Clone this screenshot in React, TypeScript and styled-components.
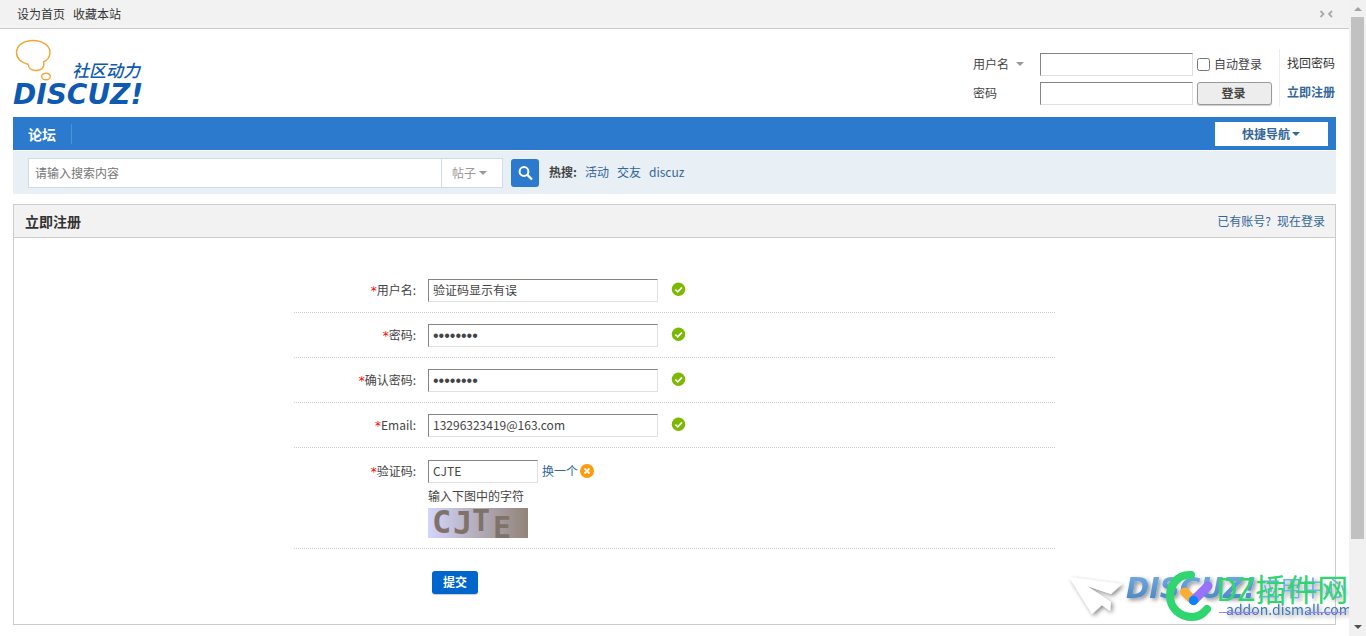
import React from 'react';
import styled, { createGlobalStyle } from 'styled-components';

const Global = createGlobalStyle`
  * { box-sizing: border-box; }
  body {
    margin: 0;
    background: #fff;
    color: #444;
    font: 12px/18px "Noto Sans CJK SC", sans-serif;
  }
  input, button, select { font: inherit; color: inherit; margin: 0; }
  a { color: inherit; text-decoration: none; }
  svg { overflow: visible; }
`;

const Shell = styled.div`
  display: flex;
  min-height: 100vh;
`;

const Page = styled.div`
  flex: 1;
  min-width: 0;
  position: relative;
  padding-bottom: 11px;
  display: flex;
  flex-direction: column;
`;

const ScrollTrack = styled.div`
  position: sticky;
  top: 0;
  flex: 0 0 17px;
  height: 100vh;
  background: #f1f1f1;
  display: flex;
  flex-direction: column;
  align-items: center;
  padding: 7px 0;
`;

const ScrollThumb = styled.div`
  width: 13px;
  height: 84%;
  margin: 6px 0 auto;
  background: #c1c1c1;
`;

const Arrow = styled.i<{ $up?: boolean; $color: string }>`
  display: inline-block;
  border: 4px solid transparent;
  border-top-width: ${p => (p.$up ? 0 : 4)}px;
  border-bottom-width: ${p => (p.$up ? 4 : 0)}px;
  border-top-color: ${p => p.$color};
  border-bottom-color: ${p => p.$color};
`;

const TopBar = styled.div`
  display: flex;
  align-items: center;
  gap: 8px;
  height: 29px;
  padding: 0 16px 0 17px;
  background: #f2f2f2;
  border-bottom: 1px solid #ccc;
`;

const WidthToggle = styled.button`
  display: flex;
  margin-left: auto;
  padding: 0;
  border: 0;
  background: none;
`;

const Wrap = styled.div`
  padding: 0 13px;
  flex: 1;
  display: flex;
  flex-direction: column;
`;

const Header = styled.header`
  display: flex;
  justify-content: space-between;
  height: 88px;
  padding-top: 10px;
`;

const LoginForm = styled.form`
  display: flex;
  padding-top: 10px;
`;

const LoginGrid = styled.div`
  display: grid;
  grid-template-columns: 67px 153px 79px;
  grid-auto-rows: 23px;
  gap: 6px 0;
  align-items: center;
  padding: 4px 7px 0 0;

  & > :nth-child(3n) { margin-left: 4px; }
`;

const LoginName = styled.label`
  display: flex;
  align-items: center;
  gap: 7px;
  padding-bottom: 2px;
`;

const AutoLogin = styled.label`
  display: flex;
  align-items: center;
  gap: 4px;
  white-space: nowrap;

  & > span { padding-bottom: 2px; }
`;

const Tick = styled.input`
  width: 13px;
  height: 13px;
`;

const TextInput = styled.input<{ $width: number }>`
  width: ${p => p.$width}px;
  height: 23px;
  padding: 0 4px 2px;
  border: 1px solid;
  border-color: #848484 #e0e0e0 #e0e0e0 #848484;
  border-radius: 0;
  background: #fff;
  outline: 0;

  &[type='password'] {
    padding-bottom: 0;
    font: 16px "Liberation Sans", sans-serif;
  }
`;

const LoginButton = styled.button`
  width: 75px;
  height: 23px;
  padding: 0 2px 1px 0;
  border: 1px solid #999;
  border-radius: 3px;
  background: #ededed;
  box-shadow: 0 1px 1px #ccc;
  font-weight: 700;
`;

const LoginLinks = styled.div`
  display: flex;
  flex-direction: column;
  gap: 11px;
  height: 58px;
  padding: 5px 1px 0 7px;
  border-left: 1px solid #e8eef5;
`;

const Link = styled.a<{ $bold?: boolean; $dark?: boolean }>`
  color: ${p => (p.$dark ? '#333' : '#369')};
  font-weight: ${p => (p.$bold ? 700 : 400)};
`;

const Nav = styled.nav`
  display: flex;
  justify-content: space-between;
  align-items: center;
  height: 33px;
  padding: 0 8px 0 0;
  background: #2b7acd;
`;

const NavItem = styled.a`
  padding: 0 15px;
  border-right: 1px solid #4a93dc;
  color: #fff;
  font-size: 14px;
  line-height: 20px;
  font-weight: 700;
`;

const QuickNav = styled.button`
  display: flex;
  align-items: center;
  justify-content: center;
  gap: 2px;
  width: 113px;
  height: 24px;
  padding: 0 1px 0 0;
  border: 0;
  background: #fff;
  color: #369;
  font-weight: 700;
`;

const SearchBar = styled.form`
  display: flex;
  align-items: center;
  height: 43px;
  margin: 1px 0 10px;
  padding: 0 15px;
  background: #e8eff5;
`;

const SearchBox = styled.div`
  display: flex;
  width: 475px;
  height: 30px;
  margin-right: 8px;
  border: 1px solid #cddde3;
  background: #fff;
`;

const SearchInput = styled.input`
  flex: 1;
  min-width: 0;
  padding: 0 6px;
  border: 0;
  background: none;
  outline: 0;
  &::placeholder { color: #757575; opacity: 1; }
`;

const SearchType = styled.button`
  display: flex;
  align-items: center;
  gap: 3px;
  width: 61px;
  padding: 0 10px;
  border: 0;
  border-left: 1px solid #cddde3;
  background: none;
  color: #999;
`;

const SearchButton = styled.button`
  display: flex;
  align-items: center;
  justify-content: center;
  width: 28px;
  height: 28px;
  margin-right: 10px;
  padding: 0;
  border: 0;
  border-radius: 3px;
  background: #2b7acd;
`;

const HotWords = styled.div`
  display: flex;
  gap: 8px;
  padding-bottom: 1px;
`;

const Panel = styled.main`
  flex: 1;
  border: 1px solid #ccc;
`;

const PanelHead = styled.div`
  display: flex;
  justify-content: space-between;
  align-items: center;
  height: 33px;
  padding: 0 10px 0 11px;
  border-bottom: 1px solid #ccc;
  background: #f2f2f2;
`;

const PanelTitle = styled.h1`
  margin: 0;
  font-size: 14px;
  line-height: 20px;
  color: #333;
`;

const HaveAccount = styled(Link)`
  display: flex;
  gap: 6px;
`;

const RegisterForm = styled.form`
  width: 100%;
  max-width: 761px;
  margin: 0 auto;
  padding: 30px 0;
`;

const Row = styled.div<{ $top?: number }>`
  display: flex;
  padding: ${p => p.$top ?? 11}px 0 10px;
  border-bottom: 1px dotted #ccc;
`;

const RowLabel = styled.label`
  width: 134px;
  padding-right: 12px;
  line-height: 21px;
  text-align: right;
`;

const Star = styled.span`
  color: #f00;
  font-family: "DejaVu Sans", sans-serif;
`;

const Field = styled.div`
  display: flex;
  flex-direction: column;
  gap: 4px;
`;

const Hint = styled.span`
  line-height: 17px;
`;

const FieldLine = styled.div`
  display: flex;
  align-items: flex-start;
  gap: 14px;

  & > svg { margin-top: 3px; }
`;

const CodeLine = styled.div`
  display: flex;
  align-items: flex-start;
  gap: 4px;
`;

const Refresh = styled.span`
  display: flex;
  align-items: center;
  gap: 2px;
  height: 21px;
`;

const Submit = styled.button`
  display: block;
  width: 46px;
  height: 23px;
  margin: 22px 0 0 138px;
  padding: 0 0 1px;
  border: 0;
  border-radius: 3px;
  background: #06c;
  box-shadow: 0 1px 1px #ccc;
  color: #fff;
  font-weight: 700;
`;

const Watermark = styled.svg`
  position: absolute;
  right: 0;
  bottom: 6px;
  pointer-events: none;
`;

const SiteLogo = () => (
  <svg width="140" height="70" viewBox="0 0 140 70" role="img" aria-label="Discuz!">
    <path
      d="M15.500 25.500C8 24 3.500 19 3.500 13.500C3.500 6.500 10.500 1.500 20 1.500S37 6.500 37 13.500C37 18 34.500 21 30.500 23C32 28 29 31.500 23 31.500C18 31.500 15 29 15.500 25.500"
      fill="none" stroke="#f5a535" strokeWidth="1.400"
    />
    <ellipse cx="33" cy="37.500" rx="4.300" ry="3.300" fill="none" stroke="#f5a535" strokeWidth="1.400" />
    <text x="59" y="38" fill="#0d5ab0" fontSize="17" fontStyle="italic" fontWeight="500" fontFamily="Noto Sans CJK SC, sans-serif">社区动力</text>
    <text x="0" y="65" fill="#0d5ab0" fontSize="28" fontStyle="italic" fontWeight="700" fontFamily="DejaVu Sans, sans-serif">DISCUZ!</text>
  </svg>
);

const Valid = () => (
  <svg width="14" height="14" viewBox="0 0 14 14">
    <circle cx="6.500" cy="7.300" r="6.700" fill="#7ab900" />
    <path d="M3.300 7.500L5.700 9.800L10 5.300" fill="none" stroke="#fff" strokeWidth="1.700" />
  </svg>
);

const Invalid = () => (
  <svg width="14" height="14" viewBox="0 0 14 14">
    <circle cx="7" cy="7" r="7" fill="#ff9a0c" />
    <path d="M4.500 4.500L9.500 9.500M9.500 4.500L4.500 9.500" stroke="#fff" strokeWidth="1.800" />
  </svg>
);

const Captcha = () => (
  <svg width="100" height="30" viewBox="0 0 100 30">
    <defs>
      <linearGradient id="captcha-bg">
        <stop offset="0" stopColor="#d3d5fb" />
        <stop offset="1" stopColor="#928478" />
      </linearGradient>
    </defs>
    <rect width="100" height="30" fill="url(#captcha-bg)" />
    <g fill="#80726a" fontFamily="DejaVu Sans Mono, monospace" fontWeight="700">
      <text x="4" y="25" fontSize="32">C</text>
      <text x="25" y="26" fontSize="32">J</text>
      <text x="44" y="23" fontSize="30">T</text>
      <text x="65" y="30" fontSize="30">E</text>
    </g>
  </svg>
);

const fields = [
  { id: 'name', label: '用户名', type: 'text', value: '验证码显示有误' },
  { id: 'pass', label: '密码', type: 'password', value: 'password' },
  { id: 'pass2', label: '确认密码', type: 'password', value: 'password' },
  { id: 'email', label: 'Email', type: 'text', value: '13296323419@163.com' },
];

export default function App() {
  return (
    <Shell>
      <Global />
      <Page>
        <TopBar>
          <Link $dark href="#">设为首页</Link>
          <Link $dark href="#">收藏本站</Link>
          <WidthToggle type="button" aria-label="切换到窄版">
            <svg width="14" height="9" viewBox="0 0 14 9" fill="none" stroke="#aaa" strokeWidth="1.800">
              <path d="M1.500 1L4.500 4L1.500 7M13 1L10 4L13 7" />
            </svg>
          </WidthToggle>
        </TopBar>
        <Wrap>
          <Header>
            <a href="#"><SiteLogo /></a>
            <LoginForm>
              <LoginGrid>
                <LoginName htmlFor="login-name">用户名 <Arrow $color="#999" /></LoginName>
                <TextInput id="login-name" $width={153} />
                <AutoLogin><Tick type="checkbox" /><span>自动登录</span></AutoLogin>
                <LoginName htmlFor="login-pass">密码</LoginName>
                <TextInput id="login-pass" type="password" $width={153} />
                <LoginButton type="button">登录</LoginButton>
              </LoginGrid>
              <LoginLinks>
                <Link $dark href="#">找回密码</Link>
                <Link $bold href="#">立即注册</Link>
              </LoginLinks>
            </LoginForm>
          </Header>
          <Nav>
            <NavItem href="#">论坛</NavItem>
            <QuickNav type="button">快捷导航<Arrow $color="#369" /></QuickNav>
          </Nav>
          <SearchBar>
            <SearchBox>
              <SearchInput placeholder="请输入搜索内容" aria-label="搜索" />
              <SearchType type="button">帖子<Arrow $color="#999" /></SearchType>
            </SearchBox>
            <SearchButton type="button" aria-label="搜索">
              <svg width="16" height="16" viewBox="0 0 16 16" fill="none" stroke="#fff">
                <circle cx="7" cy="6.500" r="4.400" strokeWidth="2" />
                <path d="M10.500 10L15 14.500" strokeWidth="2.400" />
              </svg>
            </SearchButton>
            <HotWords>
              <strong>热搜:</strong>
              <Link href="#">活动</Link>
              <Link href="#">交友</Link>
              <Link href="#">discuz</Link>
            </HotWords>
          </SearchBar>
          <Panel>
            <PanelHead>
              <PanelTitle>立即注册</PanelTitle>
              <HaveAccount href="#"><span>已有账号?</span><span>现在登录</span></HaveAccount>
            </PanelHead>
            <RegisterForm>
              {fields.map(f => (
                <Row key={f.id}>
                  <RowLabel htmlFor={f.id}><Star>*</Star>{f.label}:</RowLabel>
                  <FieldLine>
                    <TextInput id={f.id} type={f.type} defaultValue={f.value} $width={230} />
                    <Valid />
                  </FieldLine>
                </Row>
              ))}
              <Row $top={12}>
                <RowLabel htmlFor="code"><Star>*</Star>验证码:</RowLabel>
                <Field>
                  <CodeLine>
                    <TextInput id="code" defaultValue="CJTE" $width={110} />
                    <Refresh><Link href="#">换一个</Link><Invalid /></Refresh>
                  </CodeLine>
                  <Hint>输入下图中的字符</Hint>
                  <Captcha />
                </Field>
              </Row>
              <Submit type="button">提交</Submit>
            </RegisterForm>
          </Panel>
        </Wrap>
        <Watermark width="289" height="70" viewBox="1060 560 289 70">
          <defs>
            <linearGradient id="mark-blue" x1="0" y1="0" x2="0" y2="1">
              <stop offset="0" stopColor="#74aee6" />
              <stop offset="1" stopColor="#4580bd" />
            </linearGradient>
            <filter id="mark-shadow" x="-20%" y="-20%" width="140%" height="150%">
              <feDropShadow dx="2" dy="2" stdDeviation="2" floodColor="#000" floodOpacity="0.45" />
            </filter>
          </defs>
          <g filter="url(#mark-shadow)">
            <path d="M1069 577L1122 584L1111 594L1087 586L1111 602L1110 611L1102 605L1092 614Z" fill="#fff" />
            <text x="1126" y="598" fontSize="28" fontStyle="italic" fontWeight="700" fontFamily="DejaVu Sans, sans-serif" fill="url(#mark-blue)">DISCUZ!</text>
            <text x="1258" y="596" fontSize="22" fontFamily="Noto Sans CJK SC, sans-serif" fill="#74aee6">应用中心</text>
            <text x="1226" y="615" fontSize="14" fontFamily="Noto Sans CJK SC, sans-serif" fill="#3b78b4">addon.dismall.com</text>
          </g>
          <path d="M1219 612.500H1258M1307 612.500H1346" stroke="#a080ff" />
          <path d="M1191 575C1176 574 1170 587 1170 596C1170 608 1180 617 1192 617C1199 617 1204 613 1207 609" fill="none" stroke="#2fd670" strokeWidth="8" strokeLinecap="round" />
          <g fill="none" strokeWidth="9" strokeLinecap="round">
            <path d="M1184.500 592L1193 600" stroke="#f8ae35" />
            <path d="M1208 586L1194 600" stroke="#9872fa" />
          </g>
          <circle cx="1193.500" cy="600.500" r="4.700" fill="#0d80ff" />
          <text x="1216" y="601" fontSize="31" fontFamily="Noto Sans CJK SC, sans-serif" fill="#2fd670">DZ插件网</text>
        </Watermark>
      </Page>
      <ScrollTrack>
        <Arrow $up $color="#a3a3a3" />
        <ScrollThumb />
        <Arrow $color="#505050" />
      </ScrollTrack>
    </Shell>
  );
}
